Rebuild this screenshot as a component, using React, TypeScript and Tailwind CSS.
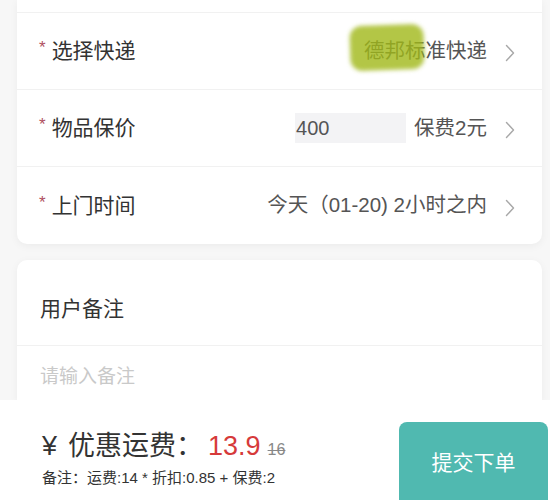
import React from "react";

const font = { fontFamily: '"Liberation Sans", "Noto Sans CJK SC", sans-serif' };

function Chevron() {
  return (
    <svg width="12" height="20" viewBox="0 0 12 20" className="ml-[17px] mt-[4px] shrink-0">
      <path d="M2.5 2.5 L9.5 10 L2.5 17.5" fill="none" stroke="#a8a8a8" strokeWidth="1.4" strokeLinecap="round" strokeLinejoin="round" />
    </svg>
  );
}

function Row({ label, children, last }: { label: string; children: React.ReactNode; last?: boolean }) {
  return (
    <div className={`flex items-center h-[77px] pl-[22px] pr-[26px] ${last ? "" : "border-b border-[#f1f1f1]"}`}>
      <span className="text-[#b0505f] text-[17px] mr-[6px] -mt-[6px]">*</span>
      <span className="text-[21px] text-[#333333]">{label}</span>
      <div className="flex-1 flex items-center justify-end text-[20.5px] text-[#555555]">{children}</div>
      <Chevron />
    </div>
  );
}

export default function App() {
  return (
    <div style={font} className="w-[550px] h-[500px] bg-[#f7f7f7] flex flex-col overflow-hidden">
      <div className="h-[400px] overflow-hidden flex flex-col">
        <div className="ml-[17px] mr-[8px] bg-white rounded-b-[10px] shadow-[0_2px_8px_rgba(0,0,0,0.05)]">
          <div className="h-[13px] border-b border-[#f1f1f1]" />
          <Row label="选择快递">
            <div className="relative">
              <span>德邦标准快递</span>
              <div className="absolute left-[-14px] top-[-11px] w-[74px] h-[45px] rounded-[12px] bg-[rgba(160,184,24,0.8)] blur-[2px] rotate-[-2deg]" />
            </div>
          </Row>
          <Row label="物品保价">
            <div className="w-[111px] h-[30px] bg-[#f3f3f5] flex items-center pl-[1px] mr-[8px] text-[20px] text-[#555555]">400</div>
            <span>保费2元</span>
          </Row>
          <Row label="上门时间" last>
            <span>今天（01-20) 2小时之内</span>
          </Row>
        </div>
        <div className="ml-[17px] mr-[8px] mt-[16px] bg-white rounded-t-[10px] shadow-[0_2px_8px_rgba(0,0,0,0.05)] flex-1">
          <div className="h-[86px] flex items-center pt-[12px] pl-[23px] border-b border-[#f1f1f1] text-[21px] text-[#333333]">
            用户备注
          </div>
          <div className="pt-[19px] pl-[23px] text-[19px] leading-[24px] text-[#c9c9c9]">请输入备注</div>
        </div>
      </div>
      <div className="h-[100px] bg-white flex">
        <div className="flex-1 flex flex-col pl-[42px] pt-[26px]">
          <div className="flex items-baseline h-[38px]">
            <span className="text-[27px] text-[#333333]">¥</span>
            <span className="text-[27px] text-[#333333] ml-[11px]">优惠运费：</span>
            <span className="text-[27px] text-[#d63a3a] ml-[5px]">13.9</span>
            <span className="text-[16px] text-[#888888] line-through ml-[7px]">16</span>
          </div>
          <div className="text-[15px] text-[#333333] mt-[3px]">备注：运费:14 * 折扣:0.85 + 保费:2</div>
        </div>
        <div className="w-[149px] mr-[2px] mt-[22px] h-[100px] rounded-[8px] bg-[#50b9b0] flex justify-center pt-[27px]">
          <span className="text-[21px] text-white leading-[28px]">提交下单</span>
        </div>
      </div>
    </div>
  );
}
